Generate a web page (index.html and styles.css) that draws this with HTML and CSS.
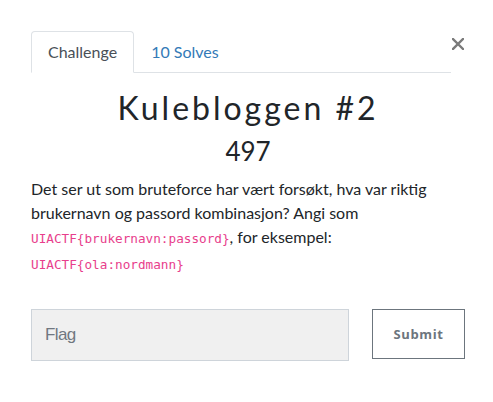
FILE: index.html
```html
<!DOCTYPE html>
<html lang="no">
<head>
<meta charset="utf-8">
<title>Kulebloggen #2</title>
<link rel="stylesheet" href="styles.css">
</head>
<body>
<div class="modal">
  <div class="header">
    <ul class="tabs">
      <li class="tab active">Challenge</li>
      <li class="tab link">10 Solves</li>
    </ul>
    <button class="close" aria-label="Close">
      <svg width="12" height="12" viewBox="0 0 12 12"><path d="M1 1 L11 11 M11 1 L1 11" stroke="#7a7a7a" stroke-width="2.4" stroke-linecap="square"/></svg>
    </button>
  </div>
  <h2 class="title">Kulebloggen #2</h2>
  <h3 class="points">497</h3>
  <p class="desc">Det ser ut som bruteforce har vært forsøkt, hva var riktig brukernavn og passord kombinasjon? Angi som <code>UIACTF{brukernavn:passord}</code>, for eksempel: <code>UIACTF{ola:nordmann}</code></p>
  <form class="submit-row">
    <input class="flag" type="text" placeholder="Flag">
    <button class="submit" type="button">Submit</button>
  </form>
</div>
</body>
</html>
```

FILE: styles.css
```css
* { box-sizing: border-box; }
body {
  margin: 0;
  background: #fff;
  font-family: Lato, "Open Sans", sans-serif;
  color: #212529;
}
.modal {
  width: 493px;
  padding: 31px 28px 0 31px;
}
.header {
  display: flex;
  align-items: flex-start;
}
.tabs {
  list-style: none;
  margin: 0;
  padding: 0;
  width: 420px;
  display: flex;
  border-bottom: 1px solid #dee2e6;
}
.tab {
  font-size: 16px;
  line-height: 24px;
  padding: 8px 16px;
  border: 1px solid transparent;
  border-radius: 4px 4px 0 0;
  margin-bottom: -1px;
}
.tab.active {
  color: #495057;
  border-color: #dee2e6 #dee2e6 #fff;
  background: #fff;
}
.tab.link {
  color: #337ab7;
}
.close {
  margin: 7px 0 0 1px;
  padding: 0;
  border: 0;
  background: none;
  width: 12px;
  height: 12px;
  display: flex;
}
.title {
  margin: 16px 0 0;
  text-align: center;
  font-size: 32px;
  line-height: 1.2;
  font-weight: 400;
  letter-spacing: 3px;
  color: #212529;
}
.points {
  margin: 9px 0 0;
  text-align: center;
  font-size: 26px;
  line-height: 1.2;
  font-weight: 400;
}
.desc {
  margin: 9px 0 0;
  font-size: 16px;
  line-height: 24px;
}
code {
  font-family: "DejaVu Sans Mono", "Liberation Mono", monospace;
  font-size: 12.7px;
  color: #e83e8c;
}
.submit-row {
  display: flex;
  align-items: flex-start;
  gap: 23px;
  margin-top: 32px;
}
.flag {
  width: 318px;
  height: 52px;
  border: 1px solid #ced4da;
  background: #f0f0f0;
  padding: 0 13px;
  font-family: "Liberation Sans", Arial, sans-serif;
  font-size: 17px;
  letter-spacing: -0.6px;
  color: #495057;
}
.flag::placeholder {
  color: #707780;
}
.submit {
  width: 93px;
  height: 50px;
  border: 1px solid #6c757d;
  background: #fff;
  color: #6c757d;
  font-family: "Open Sans", sans-serif;
  font-weight: 700;
  font-size: 13px;
  letter-spacing: 0.6px;
  padding: 0;
}
```
